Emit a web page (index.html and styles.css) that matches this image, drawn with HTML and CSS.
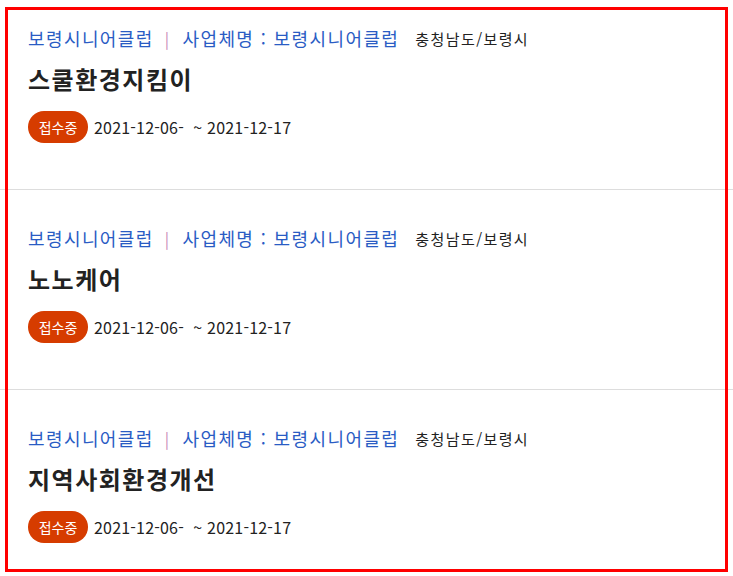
FILE: index.html
```html
<!DOCTYPE html>
<html lang="ko">
<head>
  <meta charset="UTF-8">
  <meta name="viewport" content="width=device-width, initial-scale=1.0">
  <title>사업 목록</title>
  <link rel="stylesheet" href="styles.css">
</head>
<body>

<div class="list">
  <div class="item">
    <div class="meta">
      <span class="org">보령시니어클럽</span>
      <span class="bar">|</span>
      <span class="org">사업체명 : 보령시니어클럽</span>
      <span class="region">충청남도/보령시</span>
    </div>
    <h2 class="title">스쿨환경지킴이</h2>
    <div class="period">
      <span class="badge">접수중</span>
      <span class="date">2021-12-06-&nbsp; ~ 2021-12-17</span>
    </div>
  </div>

  <div class="item">
    <div class="meta">
      <span class="org">보령시니어클럽</span>
      <span class="bar">|</span>
      <span class="org">사업체명 : 보령시니어클럽</span>
      <span class="region">충청남도/보령시</span>
    </div>
    <h2 class="title">노노케어</h2>
    <div class="period">
      <span class="badge">접수중</span>
      <span class="date">2021-12-06-&nbsp; ~ 2021-12-17</span>
    </div>
  </div>

  <div class="item">
    <div class="meta">
      <span class="org">보령시니어클럽</span>
      <span class="bar">|</span>
      <span class="org">사업체명 : 보령시니어클럽</span>
      <span class="region">충청남도/보령시</span>
    </div>
    <h2 class="title">지역사회환경개선</h2>
    <div class="period">
      <span class="badge">접수중</span>
      <span class="date">2021-12-06-&nbsp; ~ 2021-12-17</span>
    </div>
  </div>
</div>

<!-- highlight frame -->
<div class="frame"></div>

</body>
</html>
```

FILE: styles.css
```css
body {
  margin: 0;
  font-family: "Noto Sans CJK KR", "Noto Sans", sans-serif;
  background-color: #fff;
  color: #222;
  overflow: hidden;
}
.item {
  height: 200px;
  box-sizing: border-box;
  padding: 36px 28px 0;
  border-bottom: 1px solid #dddddd;
}
.item:first-child {
  height: 190px;
  padding-top: 26px;
}
.meta {
  display: flex;
  align-items: center;
  height: 24px;
  font-size: 18px;
  letter-spacing: 1.4px;
}
.org {
  color: #2a5cc4;
}
.bar {
  color: #c98bb8;
  margin: 0 12px 0 11px;
  font-size: 16px;
}
.region {
  margin-left: 16px;
  font-size: 15px;
  letter-spacing: 1.4px;
  color: #222;
}
.title {
  margin: 13px 0 0;
  height: 32px;
  line-height: 32px;
  font-size: 24px;
  letter-spacing: 1.5px;
  font-weight: bold;
  color: #222;
}
.period {
  display: flex;
  align-items: center;
  gap: 6px;
  margin-top: 16px;
}
.badge {
  display: inline-flex;
  align-items: center;
  justify-content: center;
  width: 60px;
  height: 32px;
  border-radius: 16px;
  background-color: #d63c00;
  color: #fff;
  font-size: 14px;
}
.date {
  font-size: 16px;
  letter-spacing: 0.2px;
  color: #222;
}
.frame {
  position: fixed;
  left: 5px;
  top: 7px;
  width: 723px;
  height: 565px;
  box-sizing: border-box;
  border: 3px solid #ff0000;
  pointer-events: none;
}
```
